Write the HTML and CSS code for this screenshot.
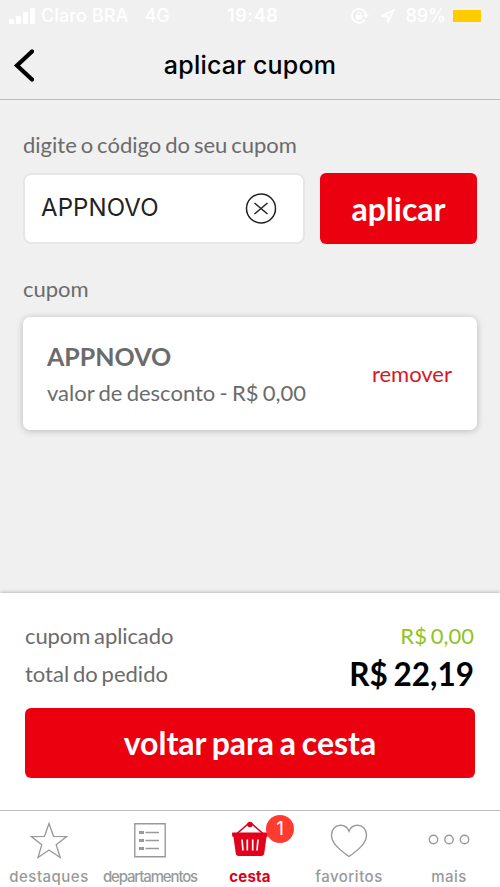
FILE: index.html
```html
<!DOCTYPE html>
<html lang="pt-BR">
<head>
<meta charset="utf-8">
<meta name="viewport" content="width=device-width, initial-scale=1">
<title>aplicar cupom</title>
<link rel="stylesheet" href="styles.css">
</head>
<body>
<div class="app">
  <header class="status">
    <div class="status-left">
      <svg class="signal" width="27" height="16" viewBox="0 0 27 16"><rect x="0" y="11" width="5" height="5" rx="1"/><rect x="7" y="8" width="5" height="8" rx="1"/><rect x="14" y="4" width="5" height="12" rx="1"/><rect x="21" y="0" width="5" height="16" rx="1"/></svg>
      <span class="carrier">Claro BRA</span><span class="network">4G</span>
    </div>
    <span class="clock">19:48</span>
    <div class="status-right">
      <svg class="lock" width="18" height="16" viewBox="0 0 18 16"><path d="M14 11.5A7 7 0 1 1 15 7" fill="none" stroke="#fff" stroke-width="1.7"/><path d="M12 6.5h6l-3 4z"/><rect x="5" y="7" width="6" height="4.5"/><path d="M6 7V6a2 2 0 0 1 4 0v1" fill="none" stroke="#fff"/></svg>
      <svg class="location" width="15" height="15" viewBox="0 0 15 15"><path d="M1.3 7.2 13.5 1.3 7.7 13.5V7.2z" fill="none" stroke="#fff" stroke-width="1.9"/></svg>
      <span class="percent">89%</span>
      <svg class="battery" width="40" height="16" viewBox="0 0 40 16"><rect x="1" y=".8" width="32" height="14.4" rx="3" fill="none" stroke="#f4f4f4" stroke-width="1"/><rect x="3" y="2" width="28" height="12" rx=".6" fill="#fc0"/><path d="M36 5.5q3 2.5 0 5z" fill="#f8f8f8"/></svg>
    </div>
  </header>
  <nav class="navbar">
    <svg class="back" width="22" height="36" viewBox="0 0 22 36"><path d="M20 3.500 5 17.500l15 14" fill="none" stroke="#000" stroke-width="4.200" stroke-linecap="round"/></svg>
    <h1 class="title">aplicar cupom</h1>
  </nav>
  <main class="content">
    <p class="label label-code">digite o código do seu cupom</p>
    <div class="form">
      <div class="field"><span class="field-value">APPNOVO</span>
        <svg width="32" height="32" viewBox="0 0 32 32" fill="none" stroke="#222" stroke-width="1.5"><circle cx="16" cy="15.500" r="14.500"/><path d="m9.500 10 13 11m0-11-13 11"/></svg>
      </div>
      <button class="button apply"><span>aplicar</span></button>
    </div>
    <p class="label label-coupon">cupom</p>
    <section class="coupon">
      <div class="coupon-info"><strong class="coupon-name">APPNOVO</strong><span class="coupon-value">valor de desconto - R$ 0,00</span></div>
      <a class="remove">remover</a>
    </section>
  </main>
  <section class="summary">
    <div class="row"><span class="applied">cupom aplicado</span><span class="discount">R$ 0,00</span></div>
    <div class="row row-total"><span class="order">total do pedido</span><strong class="total">R$ 22,19</strong></div>
    <button class="button checkout"><span>voltar para a cesta</span></button>
  </section>
  <footer class="tabs">
    <div class="tab"><svg width="40" height="38" viewBox="0 0 40 38"><path d="m20 2.500 4.500 12.800 13.200.3-10.500 8.200 4 12.700L20 29l-11 7.500 3.800-12.700L2.300 15.600l13.200-.3z" fill="none" stroke="#999" stroke-width="1.300"/></svg><span class="name wide">destaques</span></div>
    <div class="tab"><svg class="list" width="32" height="38" viewBox="0 0 32 38"><path d="M.8 2.800h30.400v32.900H.8z" fill="none" stroke="#999" stroke-width="1.400"/><path d="M5 10h5v3H5zm0 8h5v3H5zm0 8h5v3H5z" fill="#999"/><path d="M11.500 11.500H25m-13.500 8H25m-13.500 8H25" stroke="#999" stroke-width="1.300"/></svg><span class="name tight">departamentos</span></div>
    <div class="tab active"><svg width="40" height="38" viewBox="0 0 40 38"><path d="M7 12.500 18 3h4l11 9.500" fill="none" stroke="#db001b" stroke-width="1.600"/><circle cx="20" cy="3.500" r="2.800" fill="#db001b"/><path d="M3 11.500h34q1.200 0 1 1.200l-.3 2.500q-.2.800-1.200.8L34.300 32q-.4 3-3 3H8.700q-2.600 0-3-3L3.500 16q-1 0-1.200-.8l-.3-2.500q-.2-1.200 1-1.200z" fill="#e2001a"/><path d="M12 18.500 13 29.500M17.300 18.500v11M22.700 18.500v11M28 18.500 27 29.500" stroke="#fff" stroke-width="1.700"/></svg><span class="name cart">cesta</span><b class="badge">1</b></div>
    <div class="tab"><svg width="40" height="38" viewBox="0 0 40 38"><path d="M20 35.500C10 28.500 2.500 22 2.500 14c0-6 4-9.700 9-9.700 4 0 7 2.200 8.500 6 1.500-3.800 4.500-6 8.500-6 5 0 9 3.700 9 9.700 0 8-7.500 14.500-17.500 21.500z" fill="none" stroke="#999" stroke-width="1.400"/></svg><span class="name wide">favoritos</span></div>
    <div class="tab"><svg width="44" height="38" viewBox="0 0 44 38" fill="none" stroke="#999" stroke-width="1.400"><circle cx="6.500" cy="18.500" r="4.200"/><circle cx="22" cy="18.500" r="4.200"/><circle cx="37.500" cy="18.500" r="4.200"/></svg><span class="name wide">mais</span></div>
  </footer>
</div>
</body>
</html>
```
FILE: styles.css
```css
* { box-sizing: border-box; }
body { margin: 0; background: #f0f0f0; font-family: Lato, sans-serif; color: #6b6b6b; }
p, h1 { margin: 0; }
svg { display: block; flex: none; }
span, a, strong, h1, p { white-space: nowrap; }
.app { height: 887px; overflow: hidden; display: flex; flex-direction: column; }
.status { height: 32px; flex: none; padding: 0 10px 0 9px; display: grid; grid-template-columns: 216px auto 1fr; align-items: center; font: 500 18px/32px Inter, sans-serif; color: #fff; fill: #fff; }
.status-left, .status-right { display: flex; align-items: center; }
.status-left { letter-spacing: .1px; }
.status-right { justify-content: flex-end; }
.carrier { margin-left: 5px; }
.network { margin-left: 16px; }
.clock { font-weight: 600; margin-left: 2px; letter-spacing: .6px; }
.lock { margin-right: 1px; }
.location { margin: 0 10px; }
.battery { margin-left: 4px; }
.navbar { height: 68px; flex: none; padding: 0 12px; border-bottom: 1px solid #bbb; display: grid; grid-template-columns: 40px 1fr 40px; align-items: center; }
.title { font: 500 25px/32px Inter, sans-serif; letter-spacing: .2px; color: #000; text-align: center; margin-bottom: 2px; }
.content { flex: 1; padding: 0 23px; }
.label { font-size: 22px; line-height: 28px; word-spacing: -1.7px; }
.label-code { margin-top: 31px; }
.label-coupon { margin-top: 31px; }
.form { display: grid; grid-template-columns: 282px 157px; justify-content: space-between; margin-top: 14px; height: 71px; }
.field { border: 2px solid #e6e6e6; border-radius: 8px; background: #fff; display: flex; align-items: center; justify-content: space-between; padding: 0 26px 0 16px; }
.field-value { font: 24px/30px Inter, sans-serif; letter-spacing: .1px; color: #222; margin-bottom: 2px; }
.button { border: 0; padding: 0; border-radius: 6px; background: #eb000f; color: #fff; font: 700 32px/36px Lato, sans-serif; word-spacing: -2px; }
.coupon { margin-top: 14px; height: 113px; padding: 0 25px 0 24px; border-radius: 7px; background: #fff; box-shadow: 0 1px 7px rgba(0,0,0,.23); display: flex; align-items: center; justify-content: space-between; }
.coupon-info { display: grid; margin-top: 1px; }
.coupon-name { font-size: 25px; line-height: 36px; }
.coupon-value { font-size: 22px; line-height: 37px; word-spacing: -1.4px; }
.remove { color: #d31925; font-size: 22px; }
.summary { height: 217px; flex: none; padding: 23px 25px 0; background: #fff; box-shadow: 0 -1px 3px rgba(0,0,0,.22); }
.row { height: 38px; display: flex; justify-content: space-between; align-items: center; padding-right: 1px; font-size: 22px; word-spacing: -1.8px; }
.applied { letter-spacing: -.08px; }
.discount { color: #8fc31f; }
.total { color: #000; font-size: 31.5px; padding-top: 2px; }
.checkout { display: block; width: 100%; height: 70px; margin-top: 16px; }
.tabs { height: 77px; flex: none; display: grid; grid-template-columns: 98px 104px 96px 102px 98px; background: #fff; border-top: 1px solid #bbb; }
.tab { position: relative; height: 76px; display: flex; flex-direction: column; align-items: center; padding-top: 10px; font: 500 15px/20px Inter, sans-serif; color: #999; }
.name { margin-top: 8px; }
.wide { letter-spacing: .5px; }
.tight { letter-spacing: -1.15px; }
.cart { letter-spacing: .2px; }
.tab.active { color: #db001b; font-weight: 700; }
.badge { position: absolute; left: 64px; top: 4px; width: 28px; height: 28px; border-radius: 50%; background: #ff3b30; color: #fff; text-align: center; font: 400 19px/28px Inter, sans-serif; }
```
